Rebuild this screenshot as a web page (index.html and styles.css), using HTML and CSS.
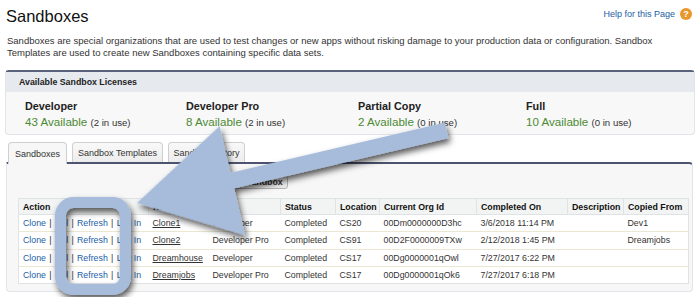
FILE: index.html
```html
<!DOCTYPE html>
<html lang="en">
<head>
  <meta charset="UTF-8">
  <title>Sandboxes</title>
  <link rel="stylesheet" href="styles.css">
</head>
<body>
  <div class="page">
    <div class="page-head">
      <h1 class="page-title">Sandboxes</h1>
      <a class="help" href="#">Help for this Page <span class="help-icon">?</span></a>
    </div>
    <p class="intro">Sandboxes are special organizations that are used to test changes or new apps without risking damage to your production data or configuration. Sandbox Templates are used to create new Sandboxes containing specific data sets.</p>

    <div class="licenses">
      <div class="licenses-head">Available Sandbox Licenses</div>
      <div class="license-list">
        <div class="license">
          <div class="license-name">Developer</div>
          <div class="license-count">43 Available <span>(2 in use)</span></div>
        </div>
        <div class="license">
          <div class="license-name">Developer Pro</div>
          <div class="license-count">8 Available <span>(2 in use)</span></div>
        </div>
        <div class="license">
          <div class="license-name">Partial Copy</div>
          <div class="license-count">2 Available <span>(0 in use)</span></div>
        </div>
        <div class="license">
          <div class="license-name">Full</div>
          <div class="license-count">10 Available <span>(0 in use)</span></div>
        </div>
      </div>
    </div>

    <div class="tabs">
      <span class="tab tab-active tab-sandboxes">Sandboxes</span>
      <span class="tab tab-templates">Sandbox Templates</span>
      <span class="tab tab-history">Sandbox History</span>
    </div>

    <div class="panel">
      <div class="button-row">
        <button class="btn">New Sandbox</button>
      </div>
      <table class="list">
        <colgroup>
          <col class="c-action"><col class="c-name"><col class="c-type"><col class="c-status"><col class="c-loc">
          <col class="c-org"><col class="c-done"><col class="c-desc"><col class="c-copied">
        </colgroup>
        <thead>
          <tr>
            <th>Action</th><th>Name</th><th>Type</th><th>Status</th><th>Location</th>
            <th>Current Org Id</th><th>Completed On</th><th>Description</th><th>Copied From</th>
          </tr>
        </thead>
        <tbody>
          <tr>
            <td class="actions"><a href="#">Clone</a><span class="sep">|</span><a href="#">Del</a><span class="sep">|</span><a href="#">Refresh</a><span class="sep">|</span><a href="#">Log In</a></td>
            <td><a class="name" href="#">Clone1</a></td><td>Developer</td><td>Completed</td><td>CS20</td>
            <td>00Dm0000000D3hc</td><td>3/6/2018 11:14 PM</td><td></td><td>Dev1</td>
          </tr>
          <tr>
            <td class="actions"><a href="#">Clone</a><span class="sep">|</span><a href="#">Del</a><span class="sep">|</span><a href="#">Refresh</a><span class="sep">|</span><a href="#">Log In</a></td>
            <td><a class="name" href="#">Clone2</a></td><td>Developer Pro</td><td>Completed</td><td>CS91</td>
            <td>00D2F0000009TXw</td><td>2/12/2018 1:45 PM</td><td></td><td>Dreamjobs</td>
          </tr>
          <tr>
            <td class="actions"><a href="#">Clone</a><span class="sep">|</span><a href="#">Del</a><span class="sep">|</span><a href="#">Refresh</a><span class="sep">|</span><a href="#">Log In</a></td>
            <td><a class="name" href="#">Dreamhouse</a></td><td>Developer</td><td>Completed</td><td>CS17</td>
            <td>00Dg0000001qOwl</td><td>7/27/2017 6:22 PM</td><td></td><td></td>
          </tr>
          <tr>
            <td class="actions"><a href="#">Clone</a><span class="sep">|</span><a href="#">Del</a><span class="sep">|</span><a href="#">Refresh</a><span class="sep">|</span><a href="#">Log In</a></td>
            <td><a class="name" href="#">Dreamjobs</a></td><td>Developer Pro</td><td>Completed</td><td>CS17</td>
            <td>00Dg0000001qOk6</td><td>7/27/2017 6:18 PM</td><td></td><td></td>
          </tr>
        </tbody>
      </table>
    </div>
  </div>

  <!-- callout drawn over the screenshot -->
  <svg class="callout" width="700" height="297" viewBox="0 0 700 297">
    <defs>
      <filter id="shade" x="-20%" y="-20%" width="140%" height="140%">
        <feDropShadow dx="2" dy="4" stdDeviation="3" flood-color="#000" flood-opacity="0.65"/>
      </filter>
    </defs>
    <g filter="url(#shade)" fill="#a6bcda" stroke="#a6bcda">
      <rect x="60.5" y="202.5" width="65" height="87" rx="13" fill="none" stroke-width="11"/>
      <polygon transform="translate(137 203) rotate(-13.2)" stroke="none"
        points="0,0 98,-56 98,-8 318,-8 318,8 98,8 98,56"/>
    </g>
  </svg>
</body>
</html>
```

FILE: styles.css
```css
html, body {
  margin: 0;
  padding: 0;
  background: #fff;
}
body {
  font-family: "Liberation Sans", Arial, sans-serif;
  color: #222;
  width: 700px;
  height: 297px;
  overflow: hidden;
  position: relative;
}
.page {
  padding: 3px 5px 0 5px;
}
.page-head {
  display: flex;
  justify-content: space-between;
  align-items: center;
  height: 26px;
  padding-left: 1px;
}
.page-title {
  margin: 0;
  font-size: 16.5px;
  font-weight: normal;
  color: #111;
}
.help {
  display: flex;
  align-items: center;
  gap: 5px;
  font-size: 9px;
  color: #1b5ea6;
  text-decoration: none;
  padding-right: 3px;
  margin-top: -4px;
}
.help-icon {
  width: 12px;
  height: 12px;
  border-radius: 50%;
  background: #e9962c;
  color: #fff;
  font-size: 9px;
  font-weight: bold;
  display: flex;
  align-items: center;
  justify-content: center;
}
.intro {
  margin: 6px 0 0 2px;
  font-size: 9.5px;
  line-height: 11.5px;
  color: #333;
}

/* licenses box */
.licenses {
  margin-top: 12px;
  border: 1px solid #e1e4e8;
  border-top: 2px solid #58627a;
  border-radius: 4px;
  background: #f8f8f8;
}
.licenses-head {
  background: #e6eaef;
  height: 20px;
  line-height: 20px;
  padding-left: 13px;
  font-size: 8.8px;
  font-weight: bold;
  color: #222;
}
.license-list {
  display: grid;
  grid-template-columns: 161px 172px 168px 1fr;
  padding: 8px 19px 4px;
}
.license-name {
  font-weight: bold;
  font-size: 10.8px;
  line-height: 13px;
}
.license-count {
  margin-top: 1px;
  font-size: 11.6px;
  line-height: 15px;
  color: #4b8a33;
}
.license-count span {
  font-size: 9.6px;
  color: #333;
}

/* tabs */
.tabs {
  display: flex;
  gap: 5px;
  margin: 7px 0 0 3px;
  height: 20px;
}
.tab {
  display: flex;
  align-items: center;
  justify-content: center;
  font-size: 9px;
  color: #333;
  background: linear-gradient(#f9f9f9, #ececec);
  border: 1px solid #cfcfcf;
  border-bottom: none;
  border-radius: 4px 4px 0 0;
  box-sizing: border-box;
  height: 20px;
}
.tab-active {
  background: #f7f7f7;
  height: 22px;
  position: relative;
  z-index: 1;
}
.tab-sandboxes { width: 59px; }
.tab-templates { width: 91px; }
.tab-history { width: 77px; }

/* panel */
.panel {
  margin: 0 2px 0 1px;
  background: #f7f7f7;
  border: 1px solid #e1e4e8;
  border-top: 2px solid #4e5470;
  border-radius: 0 4px 4px 4px;
  padding: 12px 4px 7px 11px;
}
.button-row {
  display: flex;
  padding-left: 202px;
  margin-bottom: 9px;
}
.btn {
  font-family: inherit;
  font-size: 8.8px;
  font-weight: bold;
  color: #333;
  height: 13px;
  padding: 0 4px;
  line-height: 11px;
  background: linear-gradient(#fff, #ececec);
  border: 1px solid #b5b5b5;
  border-radius: 3px;
}
.list {
  width: 670px;
  table-layout: fixed;
  border-collapse: collapse;
  background: #fff;
  border: 1px solid #e0e3e5;
  font-size: 8.8px;
}
.c-action { width: 130px; }
.c-name { width: 60px; }
.c-type { width: 72px; }
.c-status { width: 55px; }
.c-loc { width: 44px; }
.c-org { width: 97px; }
.c-done { width: 91px; }
.c-desc { width: 56px; }
.c-copied { width: 65px; }
.list th {
  background: #f2f3f3;
  font-weight: bold;
  color: #111;
  text-align: left;
  height: 15px;
  padding: 0 0 0 4px;
  border-left: 1px solid #e0e3e5;
  border-bottom: 1px solid #e0e3e5;
  white-space: nowrap;
  overflow: hidden;
}
.list th:first-child {
  border-left: none;
}
.list td {
  height: 16.25px;
  padding: 0 0 0 4px;
  border-top: 1px solid #ebe7d2;
  color: #333;
  white-space: nowrap;
  overflow: hidden;
}
.actions {
  color: #999;
}
.actions a {
  color: #1b5ea6;
  text-decoration: none;
}
.sep {
  margin: 0 3.3px;
}
.name {
  color: #333;
}

.callout {
  position: absolute;
  top: 0;
  left: 0;
  pointer-events: none;
}
```
